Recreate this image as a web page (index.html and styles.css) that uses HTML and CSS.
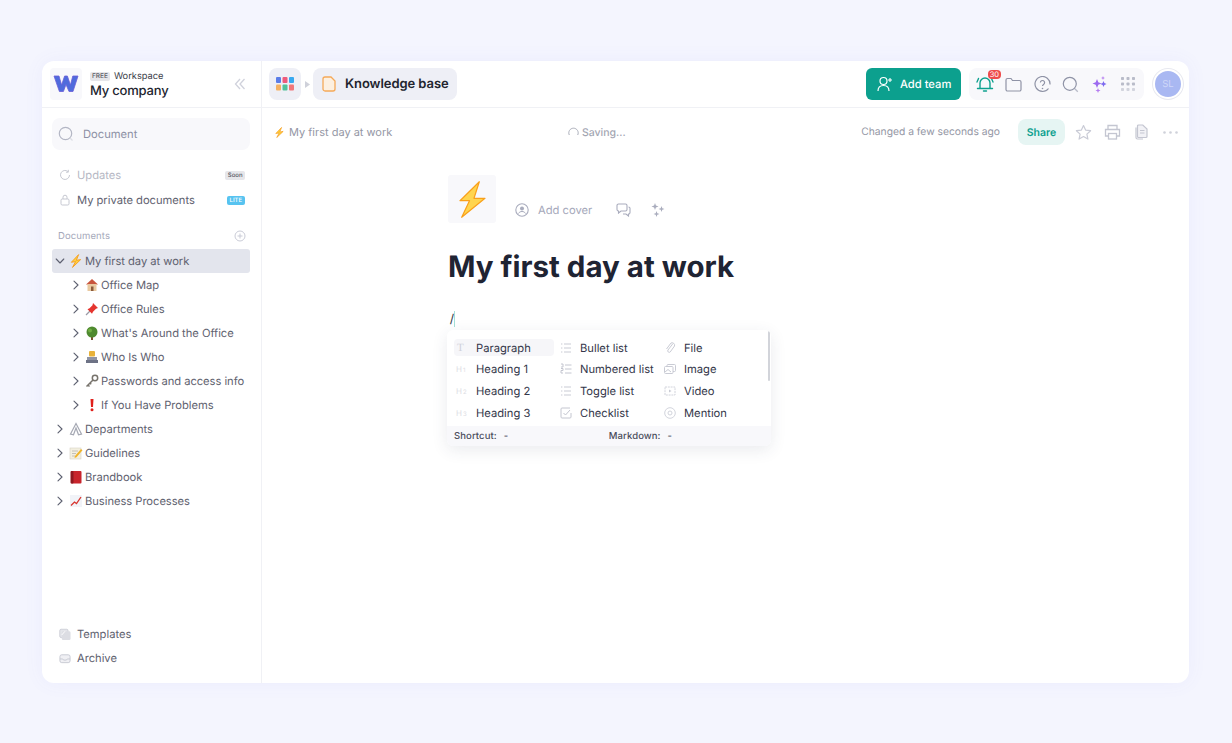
FILE: index.html
```html
<!DOCTYPE html>
<html lang="en">
<head>
<meta charset="utf-8">
<title>Knowledge base</title>
<link rel="stylesheet" href="styles.css">
</head>
<body>
<svg class="defs" width="0" height="0" aria-hidden="true">
  <defs>
    <symbol id="bolt" viewBox="0 0 24 24"><path d="M16.5 1 4 14.2l7.2-1.2L6 23l14-13.4-7.4 1.2z" fill="#ffd23f" stroke="#f59a1b" stroke-width="1.5" stroke-linejoin="round"/></symbol>
    <symbol id="chev-r" viewBox="0 0 10 10"><path d="M3 1.2 7 5 3 8.8" fill="none" stroke="#5d6070" stroke-width="1.1" stroke-linecap="round" stroke-linejoin="round"/></symbol>
    <symbol id="chev-d" viewBox="0 0 10 10"><path d="M1.2 3 5 7l3.8-4" fill="none" stroke="#5d6070" stroke-width="1.1" stroke-linecap="round" stroke-linejoin="round"/></symbol>
    <symbol id="list" viewBox="0 0 12 12"><path d="M1 2h1.400M4 2h7M1 6h1.400M4 6h7M1 10h1.400M4 10h7" stroke="#c9cbd4" stroke-width="1" fill="none"/></symbol>
  </defs>
</svg>
<div class="app">
  <aside class="sidebar">
    <div class="side-head">
      <div class="logo">
        <svg width="26" height="20" viewBox="0 0 26 20"><path d="M1 2h5l2.600 9 3-9h2.800l3 9 2.400-9H25l-5 15.500h-4l-3-7-2.600 7h-4z" fill="#4f6bdc" stroke="#6a5ed8" stroke-width=".8"/></svg>
      </div>
      <div class="workspace">
        <div class="ws-top"><span class="free">FREE</span><span class="ws-label">Workspace</span></div>
        <div class="ws-name">My company</div>
      </div>
      <svg class="collapse" width="12" height="12" viewBox="0 0 12 12"><path d="M6 1 1.500 6 6 11M10.500 1 6 6l4.500 5" fill="none" stroke="#d0d2dc" stroke-width="1.300"/></svg>
    </div>
    <div class="search">
      <svg width="16" height="16" viewBox="0 0 16 16"><circle cx="7.500" cy="7.500" r="6.200" fill="none" stroke="#b3b6c4" stroke-width="1.200"/><path d="m12 12 2.500 2.500" stroke="#dcdde4" stroke-width="1.200"/></svg>
      <span>Document</span>
    </div>
    <nav class="side-nav">
      <div class="nav-row muted">
        <svg class="nav-ico" width="12" height="12" viewBox="0 0 12 12"><path d="M10.500 6A4.500 4.500 0 1 1 9 2.600M9.300 .8v2.400H7" fill="none" stroke="#c6c8d1" stroke-width="1"/></svg>
        <span class="nav-text">Updates</span><span class="tag soon">Soon</span>
      </div>
      <div class="nav-row">
        <svg class="nav-ico" width="12" height="12" viewBox="0 0 12 12"><rect x="2" y="5" width="8" height="6" rx="1.200" fill="none" stroke="#c6c8d1"/><path d="M4 5V3.200a2 2 0 0 1 4 0V5" fill="none" stroke="#c6c8d1"/></svg>
        <span class="nav-text">My private documents</span><span class="tag lite">LITE</span>
      </div>
    </nav>
    <div class="docs-head">
      <span>Documents</span>
      <svg width="12" height="12" viewBox="0 0 12 12"><circle cx="6" cy="6" r="5" fill="none" stroke="#c9cbd6"/><path d="M6 3.500v5M3.500 6h5" stroke="#c9cbd6"/></svg>
    </div>
    <div class="tree">
      <div class="tree-row active"><svg class="chev" width="10" height="10"><use href="#chev-d"/></svg><svg class="emoji" width="14" height="14"><use href="#bolt"/></svg><span>My first day at work</span></div>
      <div class="tree-row sub"><svg class="chev" width="10" height="10"><use href="#chev-r"/></svg>
        <svg class="emoji" width="14" height="14" viewBox="0 0 14 14"><path d="M7 1 1 6.500h12z" fill="#c8553d"/><rect x="2.500" y="6" width="9" height="7" fill="#e9c9a0"/><rect x="6" y="8.500" width="2.500" height="4.500" fill="#8a5a3a"/></svg>
        <span>Office Map</span></div>
      <div class="tree-row sub"><svg class="chev" width="10" height="10"><use href="#chev-r"/></svg>
        <svg class="emoji" width="14" height="14" viewBox="0 0 14 14"><path d="M1 13 6 8" stroke="#9a9aa6" stroke-width="1.200"/><path d="M8 1l5 5-2 .8-3 3-1 2L2.500 7.300l2-1 3-3z" fill="#e5352f"/></svg>
        <span>Office Rules</span></div>
      <div class="tree-row sub"><svg class="chev" width="10" height="10"><use href="#chev-r"/></svg>
        <svg class="emoji" width="14" height="14" viewBox="0 0 14 14"><rect x="6" y="9" width="2" height="5" fill="#7a5230"/><circle cx="7" cy="6" r="5.500" fill="#4f8a2f"/><circle cx="5" cy="4.500" r="2" fill="#6fae42"/></svg>
        <span>What's Around the Office</span></div>
      <div class="tree-row sub"><svg class="chev" width="10" height="10"><use href="#chev-r"/></svg>
        <svg class="emoji" width="14" height="14" viewBox="0 0 14 14"><rect x="4" y="1" width="6" height="5.500" rx="1" fill="#e8b23a"/><rect x="2" y="7" width="10" height="3" fill="#8f94a6"/><rect x="1" y="10" width="12" height="3" fill="#6d7285"/></svg>
        <span>Who Is Who</span></div>
      <div class="tree-row sub"><svg class="chev" width="10" height="10"><use href="#chev-r"/></svg>
        <svg class="emoji" width="14" height="14" viewBox="0 0 14 14"><circle cx="10" cy="4" r="2.700" fill="none" stroke="#77736c" stroke-width="1.500"/><path d="M8 6 1.500 12.500M3 11l1.500 1.500M5 9l1.200 1.200" stroke="#77736c" stroke-width="1.500"/></svg>
        <span>Passwords and access info</span></div>
      <div class="tree-row sub"><svg class="chev" width="10" height="10"><use href="#chev-r"/></svg>
        <svg class="emoji" width="14" height="14" viewBox="0 0 14 14"><path d="M5.500 1h3L8 9H6z" fill="#e0201b"/><circle cx="7" cy="11.700" r="1.500" fill="#e0201b"/></svg>
        <span>If You Have Problems</span></div>
      <div class="tree-row"><svg class="chev" width="10" height="10"><use href="#chev-r"/></svg>
        <svg class="emoji" width="14" height="14" viewBox="0 0 14 14"><path d="M7 1.500 1.500 12l3 .8L7 6l2.500 6.800 3-.8z" fill="none" stroke="#a5a8b3" stroke-width="1.200"/></svg>
        <span>Departments</span></div>
      <div class="tree-row"><svg class="chev" width="10" height="10"><use href="#chev-r"/></svg>
        <svg class="emoji" width="14" height="14" viewBox="0 0 14 14"><rect x="1" y="2" width="11" height="11" fill="#f3efe0" stroke="#d6d2c2" stroke-width=".6"/><path d="M3 5h6M3 7.500h4M3 10h3" stroke="#b8b6ab" stroke-width=".8"/><path d="m6 10 6-7 1.500 1.300-6 7-2 .6z" fill="#f0b429"/></svg>
        <span>Guidelines</span></div>
      <div class="tree-row"><svg class="chev" width="10" height="10"><use href="#chev-r"/></svg>
        <svg class="emoji" width="14" height="14" viewBox="0 0 14 14"><rect x="2" y="1" width="10.500" height="12.500" rx="1" fill="#c8242c"/><rect x="1.500" y="1" width="3" height="12.500" rx="1" fill="#8f1820"/></svg>
        <span>Brandbook</span></div>
      <div class="tree-row"><svg class="chev" width="10" height="10"><use href="#chev-r"/></svg>
        <svg class="emoji" width="14" height="14" viewBox="0 0 14 14"><rect x="1" y="1" width="12" height="12" fill="#f1f3f8"/><path d="M2 11.500 5.500 8l2 1.500L12 3" fill="none" stroke="#d8352f" stroke-width="1.300"/></svg>
        <span>Business Processes</span></div>
    </div>
    <div class="side-foot">
      <div class="nav-row">
        <svg class="nav-ico" width="13" height="13" viewBox="0 0 13 13"><rect x=".8" y=".8" width="9" height="9" rx="1.500" fill="#e4e5ea" stroke="#c6c8d1" stroke-width=".8"/><rect x="3" y="3" width="9.500" height="9.500" rx="1.500" fill="#dcdde3"/><path d="m3 7 3.500-4" stroke="#fff"/></svg>
        <span class="nav-text">Templates</span>
      </div>
      <div class="nav-row">
        <svg class="nav-ico" width="13" height="13" viewBox="0 0 13 13"><rect x="1" y="2.500" width="11" height="8.500" rx="2" fill="#f0f0f4" stroke="#c6c8d1"/><path d="M1 7h3l1 1.200h3L9 7h3" fill="none" stroke="#c6c8d1"/></svg>
        <span class="nav-text">Archive</span>
      </div>
    </div>
  </aside>
  <main class="main">
    <header class="topbar">
      <div class="grid-btn">
        <svg width="18" height="14" viewBox="0 0 18 14"><rect width="5" height="6" rx="1" fill="#5b7de8"/><rect x="6.500" width="5" height="6" rx="1" fill="#ee5a7c"/><rect x="13" width="5" height="6" rx="1" fill="#38a9f0"/><rect y="7.500" width="5" height="6" rx="1" fill="#f5b163"/><rect x="6.500" y="7.500" width="5" height="6" rx="1" fill="#52c29a"/><rect x="13" y="7.500" width="5" height="6" rx="1" fill="#f2777a"/></svg>
      </div>
      <svg class="crumb-arrow" width="5" height="7" viewBox="0 0 5 7"><path d="M0 0l5 3.500L0 7z" fill="#cfd1da"/></svg>
      <div class="kb-pill">
        <svg width="14" height="16" viewBox="0 0 14 16"><path d="M3 1h6l4 4v8a2 2 0 0 1-2 2H3a2 2 0 0 1-2-2V3a2 2 0 0 1 2-2z" fill="#fdf0e0" stroke="#f5a958" stroke-width="1.300"/></svg>
        <span>Knowledge base</span>
      </div>
      <div class="top-right">
        <button class="add-team">
          <svg width="16" height="16" viewBox="0 0 16 16"><circle cx="6.500" cy="5" r="3.500" fill="none" stroke="#fff" stroke-width="1.200"/><path d="M1 15c0-3.500 2.200-5.500 5.500-5.500S12 11.500 12 15" fill="none" stroke="#fff" stroke-width="1.200"/><path d="M13 2v4M11 4h4" stroke="#fff" stroke-width="1.100"/></svg>
          <span>Add team</span>
        </button>
        <div class="tools">
          <div class="tool bell">
            <svg width="18" height="18" viewBox="0 0 18 18"><path d="M4 13V8a5 5 0 0 1 10 0v5M1.500 13.500h15M7.500 16h3M2.500 3.500 1 7M15.500 3.500 17 7" fill="none" stroke="#0ea18f" stroke-width="1.400" stroke-linecap="round"/></svg>
            <span class="badge">30</span>
          </div>
          <div class="tool"><svg width="17" height="15" viewBox="0 0 17 15"><path d="M1 3a1.500 1.500 0 0 1 1.500-1.500H6l1.500 2h7A1.500 1.500 0 0 1 16 5v7.500a1.500 1.500 0 0 1-1.500 1.500h-12A1.500 1.500 0 0 1 1 12.500z" fill="none" stroke="#8f93a6" stroke-width="1.200"/></svg></div>
          <div class="tool"><svg width="17" height="17" viewBox="0 0 17 17"><path d="M14.500 12.500A7.500 7.500 0 1 1 16 8.500" fill="none" stroke="#8f93a6" stroke-width="1.200"/><path d="M6.400 6.600a2.100 2.100 0 1 1 3.200 1.800c-.7.500-1.100.9-1.100 1.700" fill="none" stroke="#8f93a6" stroke-width="1.200"/><circle cx="8.500" cy="12.500" r=".8" fill="#8f93a6"/></svg></div>
          <div class="tool"><svg width="17" height="17" viewBox="0 0 17 17"><circle cx="7.800" cy="7.800" r="6.500" fill="none" stroke="#8f93a6" stroke-width="1.200"/><path d="m12.800 12.800 3 3" stroke="#b9bcc9" stroke-width="1.300"/></svg></div>
          <div class="tool"><svg width="17" height="17" viewBox="0 0 17 17"><path d="M6 3l1.300 3.200L10.500 7.500 7.300 8.800 6 12 4.700 8.800 1.500 7.500l3.200-1.300z" fill="#9d6af0"/><path d="M12.500 5l.9 2.100 2.100.9-2.100.9-.9 2.100-.9-2.100L9.500 8l2.100-.9z" fill="#7d6bf0"/><path d="M12 0l.6 1.400L14 2l-1.400.6L12 4l-.6-1.400L10 2l1.400-.6zM7 12l.7 1.800 1.800.7-1.800.7L7 17l-.7-1.800-1.800-.7 1.800-.7z" fill="#b57cf0"/></svg></div>
          <div class="tool"><svg width="14" height="14" viewBox="0 0 14 14" fill="#b9bcc9"><rect width="3" height="3" rx=".8"/><rect x="5.500" width="3" height="3" rx=".8"/><rect x="11" width="3" height="3" rx=".8"/><rect y="5.500" width="3" height="3" rx=".8"/><rect x="5.500" y="5.500" width="3" height="3" rx=".8"/><rect x="11" y="5.500" width="3" height="3" rx=".8"/><rect y="11" width="3" height="3" rx=".8" opacity=".6"/><rect x="5.500" y="11" width="3" height="3" rx=".8" opacity=".6"/><rect x="11" y="11" width="3" height="3" rx=".8" opacity=".6"/></svg></div>
        </div>
        <div class="avatar">SL</div>
      </div>
    </header>
    <div class="doc-bar">
      <div class="doc-crumb"><svg width="11" height="11"><use href="#bolt"/></svg><span>My first day at work</span></div>
      <div class="saving"><svg width="11" height="11" viewBox="0 0 11 11"><path d="M1.300 8A4.700 4.700 0 1 1 9.700 8" fill="none" stroke="#a9acb8" stroke-width="1"/></svg><span>Saving...</span></div>
      <div class="doc-actions">
        <span class="changed">Changed a few seconds ago</span>
        <button class="share">Share</button>
        <svg class="act star" width="17" height="17" viewBox="0 0 17 17"><path d="M8.500 1.500l2.100 4.600 5 .6-3.700 3.400 1 5-4.400-2.500-4.400 2.500 1-5L1.400 6.700l5-.6z" fill="none" stroke="#c9cbd6" stroke-width="1.200" stroke-linejoin="round"/></svg>
        <svg class="act" width="17" height="16" viewBox="0 0 17 16"><path d="M4 5V1.500h9V5M4 12H1.500V5.500h14V12H13" fill="none" stroke="#c4c6d1" stroke-width="1.300"/><rect x="4.500" y="9.500" width="8" height="5.500" fill="none" stroke="#c4c6d1" stroke-width="1.300"/></svg>
        <svg class="act" width="16" height="16" viewBox="0 0 16 16"><path d="M3 3.500v10a1.500 1.500 0 0 0 1.500 1.500H10" fill="none" stroke="#c4c6d1" stroke-width="1.200"/><path d="M5.500 1h4.300L14 5v7.500a1 1 0 0 1-1 1H5.500a1 1 0 0 1-1-1v-10.500a1 1 0 0 1 1-1z" fill="#f2f2f6" stroke="#c4c6d1" stroke-width="1.200"/><path d="M7 6.500h4.500M7 9h4.500" stroke="#c4c6d1"/></svg>
        <svg class="act dots" width="15" height="3" viewBox="0 0 15 3" fill="#cfd1da"><circle cx="1.500" cy="1.500" r="1.300"/><circle cx="7.500" cy="1.500" r="1.300"/><circle cx="13.500" cy="1.500" r="1.300"/></svg>
      </div>
    </div>
    <article class="doc">
      <div class="doc-meta">
        <div class="doc-icon"><svg width="28" height="38" viewBox="0 0 28 38"><path d="M21.300 1.700 2 20.700h9.500L3.700 37.300 27 18.300H16z" fill="#ffd54f" stroke="#f9a01b" stroke-width="1.200" stroke-linejoin="round"/></svg></div>
        <div class="doc-tools">
          <svg width="14" height="14" viewBox="0 0 14 14"><circle cx="7" cy="7" r="6.200" fill="none" stroke="#a9acbd" stroke-width="1.100"/><circle cx="7" cy="5.500" r="2" fill="#a9acbd"/><path d="M3.500 10.500c.8-1.500 2-2 3.500-2s2.700.5 3.500 2" fill="none" stroke="#a9acbd"/></svg>
          <span class="cover">Add cover</span>
          <svg class="comment" width="15" height="14" viewBox="0 0 15 14"><path d="M1 2.500A1.500 1.500 0 0 1 2.500 1h7A1.500 1.500 0 0 1 11 2.500v4A1.500 1.500 0 0 1 9.500 8H5L2.500 10V8A1.500 1.500 0 0 1 1 6.500z" fill="#fff" stroke="#a9acbd" stroke-width="1.100"/><path d="M12.500 4A1.500 1.500 0 0 1 14 5.500v4a1.500 1.500 0 0 1-1.500 1.500v2L10 11H7" fill="none" stroke="#a9acbd" stroke-width="1.100"/></svg>
          <svg class="sparkle" width="14" height="14" viewBox="0 0 14 14" fill="#a9acbd"><path d="M4 0l.9 2.600L7.500 3.500 4.900 4.400 4 7l-.9-2.600L.5 3.500l2.600-.9zM10.500 3l.8 2.200 2.200.8-2.200.8-.8 2.200-.8-2.200L7.500 6l2.200-.8zM5.500 8l.8 2.200 2.200.8-2.200.8-.8 2.200-.8-2.200L2.500 11l2.200-.8z"/></svg>
        </div>
      </div>
      <h1 class="title">My first day at work</h1>
      <div class="caret-line"><span class="slash">/</span><span class="caret"></span></div>
      <section class="menu">
        <div class="menu-grid">
          <div class="menu-item sel"><span class="mi t">T</span><span class="label">Paragraph</span></div>
          <div class="menu-item"><svg class="mi-svg" width="12" height="12"><use href="#list"/></svg><span class="label">Bullet list</span></div>
          <div class="menu-item"><svg class="mi-svg" width="12" height="12" viewBox="0 0 12 12"><path d="M9 1.500 4 8a1.500 1.500 0 0 0 2.200 2L10.500 4A2.500 2.500 0 0 0 7 1L2.500 7" fill="none" stroke="#c9cbd4"/></svg><span class="label">File</span></div>
          <div class="menu-item"><span class="mi h">H<small>1</small></span><span class="label">Heading 1</span></div>
          <div class="menu-item"><svg class="mi-svg" width="12" height="12" viewBox="0 0 12 12"><path d="M1 1h2v3H1M1 5.500h2v2H1v2.500h2M5 2h6.500M5 6h6.500M5 10h6.500" fill="none" stroke="#c4c6d0"/></svg><span class="label">Numbered list</span></div>
          <div class="menu-item"><svg class="mi-svg" width="12" height="12" viewBox="0 0 12 12"><rect x="3" y="1.500" width="8.500" height="7" rx="1" fill="none" stroke="#c9cbd4"/><rect x=".5" y="3.500" width="8.500" height="7" rx="1" fill="#fff" stroke="#c9cbd4"/><path d="m1 9 3-2.500L7 9" fill="none" stroke="#c9cbd4"/></svg><span class="label">Image</span></div>
          <div class="menu-item"><span class="mi h">H<small>2</small></span><span class="label">Heading 2</span></div>
          <div class="menu-item"><svg class="mi-svg" width="12" height="12"><use href="#list"/></svg><span class="label">Toggle list</span></div>
          <div class="menu-item"><svg class="mi-svg" width="12" height="12" viewBox="0 0 12 12"><rect x="1" y="2" width="10" height="8" fill="none" stroke="#d2d4dc" stroke-dasharray="2 .8"/><path d="M5 4.500v3l2.500-1.500z" fill="#c9cbd4"/></svg><span class="label">Video</span></div>
          <div class="menu-item"><span class="mi h">H<small>3</small></span><span class="label">Heading 3</span></div>
          <div class="menu-item"><svg class="mi-svg" width="12" height="12" viewBox="0 0 12 12"><path d="M11 6v4a1 1 0 0 1-1 1H2a1 1 0 0 1-1-1V2a1 1 0 0 1 1-1h8" fill="none" stroke="#c4c6d0"/><path d="m3.500 6 2 2L10 3" fill="none" stroke="#c4c6d0"/></svg><span class="label">Checklist</span></div>
          <div class="menu-item"><svg class="mi-svg" width="12" height="12" viewBox="0 0 12 12"><circle cx="6" cy="6" r="5.300" fill="none" stroke="#d2d4dc"/><circle cx="6" cy="6" r="2" fill="none" stroke="#d2d4dc"/></svg><span class="label">Mention</span></div>
        </div>
        <div class="scroll-thumb"></div>
        <div class="menu-foot"><span class="f1">Shortcut:</span><span class="f2">-</span><span class="f3">Markdown:</span><span class="f4">-</span></div>
      </section>
    </article>
  </main>
</div>
</body>
</html>
```

FILE: styles.css
```css
* { box-sizing: border-box; }
html, body { margin: 0; height: 100%; }
body {
  background: #f4f5fe;
  padding: 61px 43px 60px 42px;
  font-family: Inter, "Noto Sans", sans-serif;
  color: #5f6270;
  overflow: hidden;
  text-rendering: geometricPrecision;
}
.defs { position: absolute; }
svg { display: block; flex: none; }
.app {
  display: flex;
  height: 622px;
  background: #fff;
  border-radius: 12px;
  overflow: hidden;
  box-shadow: 0 0 20px rgba(100, 110, 240, .06);
}
.sidebar {
  width: 220px;
  flex: none;
  display: flex;
  flex-direction: column;
  border-right: 1px solid #f0f1f5;
}
.side-head {
  height: 47px;
  flex: none;
  display: flex;
  align-items: center;
  padding: 0 15px 0 8px;
  border-bottom: 1px solid #f0f1f5;
}
.logo {
  width: 32px;
  height: 32px;
  border-radius: 4px;
  background: #f8f8fb;
  display: flex;
  align-items: center;
  justify-content: center;
}
.workspace { margin-left: 8px; flex: 1; }
.ws-top { display: flex; align-items: center; gap: 4px; height: 14px; }
.free {
  font-size: 6.500px;
  font-weight: 500;
  line-height: 9px;
  padding: 0 2px;
  background: #e6e6ea;
  color: #5b5d66;
  border-radius: 2px;
}
.ws-label { font-size: 9.300px; color: #3a3c48; }
.ws-name { font-size: 13px; font-weight: 500; color: #22242e; line-height: 16px; letter-spacing: -.2px; }
.search {
  margin: 10px 11px 0 10px;
  height: 32px;
  flex: none;
  background: #f8f8fb;
  border-radius: 8px;
  display: flex;
  align-items: center;
  gap: 9px;
  padding-left: 6px;
  font-size: 11.200px;
  color: #8d90a5;
}
.side-nav { margin-top: 13px; }
.nav-row {
  display: flex;
  align-items: center;
  height: 24px;
  margin-bottom: 1px;
  padding: 0 16px 0 17px;
  font-size: 11.200px;
  letter-spacing: -.02px;
}
.nav-ico { width: 12px; margin-right: 6px; }
.nav-text { flex: 1; }
.nav-row.muted { color: #b6b8c4; }
.tag {
  font-size: 6px;
  line-height: 9px;
  height: 9px;
  border-radius: 2px;
  font-weight: 500;
}
.soon { background: #e6e6ea; color: #55575f; padding: 0 2.500px; }
.lite { background: #57c3f0; color: #fff; padding: 0 3px; }
.docs-head {
  display: flex;
  justify-content: space-between;
  align-items: center;
  margin-top: 17px;
  height: 12px;
  padding: 0 15px 0 16px;
  font-size: 9.500px;
  color: #a5a8ba;
  letter-spacing: .1px;
}
.tree { margin: 7px 11px 0 10px; }
.tree-row {
  display: flex;
  align-items: center;
  height: 24px;
  padding-left: 3px;
  font-size: 11.200px;
  letter-spacing: -.04px;
  white-space: nowrap;
  border-radius: 3px;
}
.tree-row.active { background: #e3e5ed; }
.tree-row.sub { padding-left: 19px; }
.chev { margin-right: 4px; }
.emoji { margin-right: 2px; }
.side-foot { margin-top: auto; padding-bottom: 13px; }
.side-foot .nav-row { margin-bottom: 0; }
.main { flex: 1; min-width: 0; display: flex; flex-direction: column; }
.topbar {
  height: 47px;
  flex: none;
  display: flex;
  align-items: center;
  padding: 0 6px 0 7px;
  border-bottom: 1px solid #f0f1f5;
}
.grid-btn {
  width: 32px;
  height: 32px;
  border-radius: 8px;
  background: #eeeff6;
  display: flex;
  align-items: center;
  justify-content: center;
}
.crumb-arrow { margin: 0 3px 0 4px; }
.kb-pill {
  height: 32px;
  width: 144px;
  border-radius: 8px;
  background: #eeeff6;
  display: flex;
  align-items: center;
  gap: 9px;
  padding-left: 9px;
  font-size: 13px;
  font-weight: 600;
  color: #22242e;
  letter-spacing: -.07px;
}
.top-right { margin-left: auto; display: flex; align-items: center; }
.add-team {
  width: 95px;
  height: 32px;
  border: 0;
  border-radius: 6px;
  background: #0ca08e;
  color: #fff;
  font: 500 11.200px Inter, sans-serif;
  text-rendering: geometricPrecision;
  display: flex;
  align-items: center;
  gap: 7px;
  padding: 0 0 0 11px;
}
.tools {
  margin-left: 8px;
  width: 175px;
  height: 32px;
  border-radius: 8px;
  background: #f8f8fb;
  display: flex;
  align-items: center;
  padding-left: 1.700px;
}
.tool {
  width: 28.600px;
  display: flex;
  justify-content: center;
  position: relative;
}
.badge {
  position: absolute;
  top: -5px;
  left: 17px;
  height: 9px;
  padding: 0 2px;
  font-size: 7.500px;
  line-height: 9px;
  color: #fff;
  background: #ee4b4b;
  border-radius: 4px;
}
.avatar {
  width: 30px;
  height: 30px;
  margin-left: 9px;
  border-radius: 50%;
  background: #a9b8f2;
  border: 2px solid #fff;
  box-shadow: 0 0 0 1px #e8e9f0;
  color: #cfd7f8;
  font-size: 9.500px;
  display: flex;
  align-items: center;
  justify-content: center;
}
.doc-bar {
  height: 48px;
  flex: none;
  display: flex;
  align-items: center;
  padding: 0 11px 0 12px;
  font-size: 11px;
  color: #9497a5;
}
.doc-crumb { display: flex; align-items: center; gap: 4px; width: 294px; }
.saving { display: flex; align-items: center; gap: 3px; font-weight: 500; font-size: 10.500px; color: #a3a6b2; }
.doc-actions { margin-left: auto; display: flex; align-items: center; }
.changed { font-size: 10.300px; }
.share {
  margin-left: 18px;
  width: 47px;
  height: 26px;
  border: 0;
  border-radius: 8px;
  background: #e6f5f3;
  color: #0ca08e;
  font: 600 10.500px Inter, sans-serif;
  text-rendering: geometricPrecision;
}
.act { margin-left: 12px; }
.star { margin-left: 10px; }
.dots { margin-left: 14px; }
.doc { padding: 19px 0 0 186px; flex: 1; }
.doc-meta { display: flex; align-items: flex-end; }
.doc-icon {
  width: 48px;
  height: 48px;
  border-radius: 3px;
  background: #f8f8fb;
  display: flex;
  align-items: center;
  justify-content: center;
}
.doc-tools {
  display: flex;
  align-items: center;
  height: 14px;
  margin: 0 0 6px 19px;
  font-size: 11.200px;
  color: #a5a8ba;
}
.cover { margin-left: 9px; width: 70px; }
.comment { margin-left: 8px; }
.sparkle { margin-left: 20px; }
.title {
  margin: 25px 0 0;
  font-size: 29.500px;
  line-height: 38px;
  font-weight: 700;
  color: #1f2433;
}
.caret-line { display: flex; align-items: center; height: 16px; margin-top: 25px; padding-left: 2px; font: 14px "Liberation Sans", sans-serif; color: #3c3f4c; }
.caret { width: 1px; height: 16px; background: #a5e0d8; }
.menu {
  position: relative;
  width: 324px;
  margin: 3px 0 0 -1px;
  height: 116px;
  background: #fff;
  border-radius: 6px;
  box-shadow: 0 4px 16px rgba(50, 55, 90, .1);
  overflow: hidden;
}
.menu-grid {
  display: grid;
  grid-template-columns: 106px 104px 104px;
  grid-auto-rows: 21.600px;
  padding: 7px 0 0 7px;
}
.menu-item { display: flex; align-items: center; font-size: 11.200px; color: #34374a; white-space: nowrap; }
.menu-item.sel { background: #f6f6f9; border-radius: 4px; width: 100px; height: 17px; align-self: center; }
.mi { width: 22px; flex: none; color: #cfd1da; }
.mi.t { font: 11px "Liberation Serif", serif; padding-left: 3px; }
.mi.h { font-size: 8px; padding-left: 2px; color: #dcdde4; }
.mi small { font-size: 6px; margin-left: 1px; }
.mi-svg { margin: 0 8px 0 0; }
.scroll-thumb {
  position: absolute;
  top: 1px;
  right: 1px;
  width: 2px;
  height: 50px;
  background: #d2d4da;
  border-radius: 1px;
}
.menu-foot {
  position: absolute;
  left: 0;
  right: 0;
  bottom: 0;
  height: 20px;
  background: #f8f8fb;
  display: flex;
  align-items: center;
  padding-left: 7px;
  font-size: 9.500px;
  font-weight: 500;
  color: #4a4d5c;
  letter-spacing: .1px;
}
.f2 { margin-left: 7px; width: 105px; }
.f4 { margin-left: 7px; }
```
